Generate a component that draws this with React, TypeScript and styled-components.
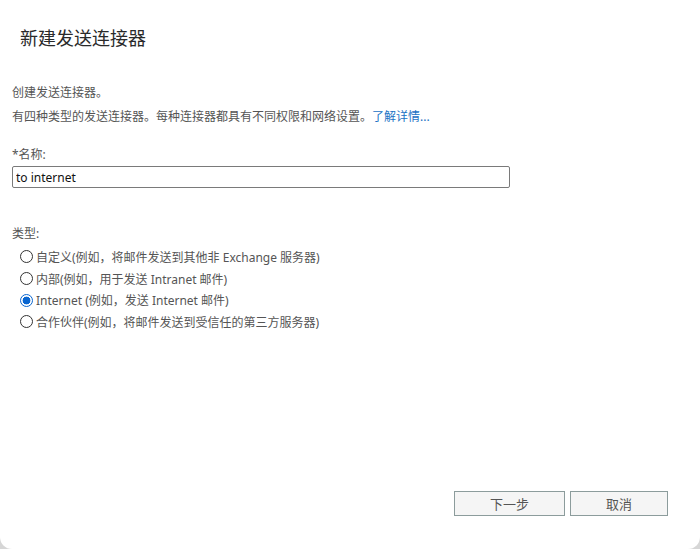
import React, { useState } from 'react';
import styled, { createGlobalStyle } from 'styled-components';

const GlobalStyle = createGlobalStyle`
  html, body {
    margin: 0;
    padding: 0;
    background: #d6d6d6;
  }
  body {
    font-family: "Segoe UI", "Noto Sans", "Noto Sans CJK SC", sans-serif;
    color: #444;
  }
`;

const types = [
  { id: 'custom', label: '自定义(例如，将邮件发送到其他非 Exchange 服务器)' },
  { id: 'internal', label: '内部(例如，用于发送 Intranet 邮件)' },
  { id: 'internet', label: 'Internet (例如，发送 Internet 邮件)' },
  { id: 'partner', label: '合作伙伴(例如，将邮件发送到受信任的第三方服务器)' },
];

function App() {
  const [name, setName] = useState('to internet');
  const [kind, setKind] = useState('internet');

  return (
    <>
      <GlobalStyle />
      <Window>
        <Title>新建发送连接器</Title>
        <Body>
          <Text>创建发送连接器。</Text>
          <Text>
            有四种类型的发送连接器。每种连接器都具有不同权限和网络设置。
            <Link href="#">了解详情...</Link>
          </Text>

          <FieldLabel $top={17}>*名称:</FieldLabel>
          <NameInput value={name} onChange={(e) => setName(e.target.value)} />

          <FieldLabel $top={37}>类型:</FieldLabel>
          <RadioList>
            {types.map((t) => (
              <RadioRow key={t.id} onClick={() => setKind(t.id)}>
                <RadioCircle $checked={kind === t.id} />
                <span>{t.label}</span>
              </RadioRow>
            ))}
          </RadioList>
        </Body>
        <Footer>
          <Button $width={111}>下一步</Button>
          <Button $width={98}>取消</Button>
        </Footer>
      </Window>
    </>
  );
}

export default App;

const Window = styled.div`
  width: 700px;
  height: 549px;
  box-sizing: border-box;
  background: #fff;
  border-radius: 0 0 12px 12px;
  display: flex;
  flex-direction: column;
`;

const Title = styled.h1`
  margin: 0;
  padding: 24px 20px 0;
  font-size: 18px;
  line-height: 26px;
  font-weight: 400;
  color: #2a2a2a;
  font-family: "Noto Sans CJK SC", sans-serif;
`;

const Body = styled.div`
  padding: 31px 12px 0;
  display: flex;
  flex-direction: column;
  font-size: 12px;
`;

const Text = styled.p`
  margin: 0;
  line-height: 24px;
  color: #555;
`;

const Link = styled.a`
  color: #1b72c4;
  text-decoration: none;
`;

const FieldLabel = styled.div<{ $top: number }>`
  margin-top: ${(p) => p.$top}px;
  line-height: 18px;
  color: #555;
`;

const NameInput = styled.input`
  margin-top: 2px;
  width: 498px;
  height: 22px;
  box-sizing: border-box;
  border: 1px solid #7a7a7a;
  border-radius: 2px;
  padding: 0 3px;
  font-family: "Segoe UI", "Noto Sans", "Noto Sans CJK SC", sans-serif;
  font-size: 12px;
  color: #111;
  outline: none;
`;

const RadioList = styled.div`
  margin-top: 3px;
  padding-left: 8px;
  display: flex;
  flex-direction: column;
`;

const RadioRow = styled.label`
  display: flex;
  align-items: center;
  gap: 3px;
  height: 21.7px;
  color: #555;
  cursor: pointer;
`;

const RadioCircle = styled.span<{ $checked: boolean }>`
  width: 13px;
  height: 13px;
  box-sizing: border-box;
  border-radius: 50%;
  border: 1px solid ${(p) => (p.$checked ? '#0a66d0' : '#333')};
  background: ${(p) =>
    p.$checked ? 'radial-gradient(circle, #0a66d0 0 3.6px, #fff 4.2px)' : '#fff'};
  flex-shrink: 0;
`;

const Footer = styled.div`
  margin-top: auto;
  display: flex;
  justify-content: flex-end;
  gap: 5px;
  padding: 0 32px 33px 0;
`;

const Button = styled.button<{ $width: number }>`
  width: ${(p) => p.$width}px;
  height: 25px;
  box-sizing: border-box;
  border: 1px solid #8c9c9c;
  background: #f5f5f5;
  color: #555;
  font-family: "Noto Sans CJK SC", sans-serif;
  font-size: 13px;
  padding: 0;
  cursor: pointer;
`;
